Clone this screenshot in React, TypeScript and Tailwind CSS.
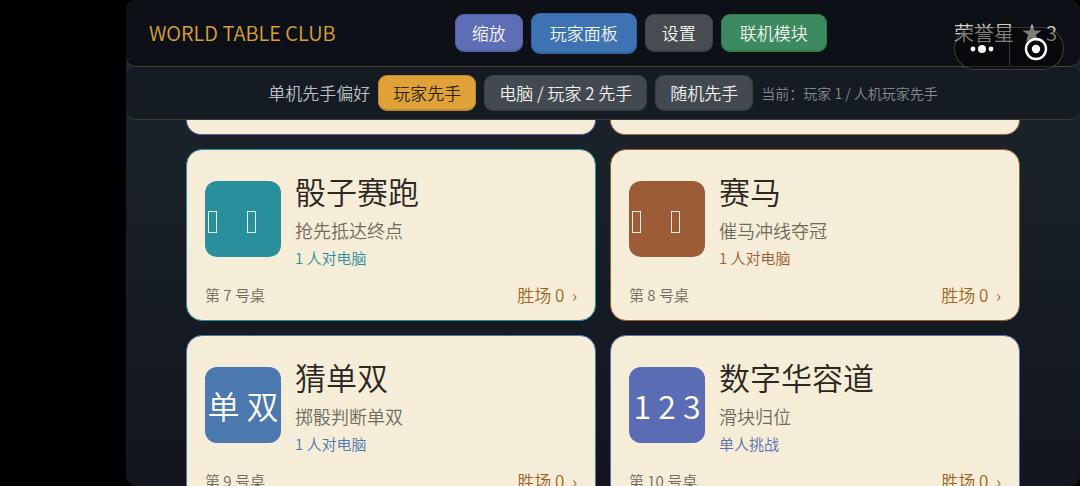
import React, { useState } from 'react';

interface Game {
  table: number;
  title: string;
  subtitle: string;
  mode: string;
  icon: string | null;
  wins: number;
  border: string;
  tile: string;
  accent: string;
}

const games: Game[] = [
  { table: 7, title: '骰子赛跑', subtitle: '抢先抵达终点', mode: '1 人对电脑', icon: null, wins: 0, border: 'border-[#2a8f9c]', tile: 'bg-[#2a8f9c]', accent: 'text-[#2a8f9c]' },
  { table: 8, title: '赛马', subtitle: '催马冲线夺冠', mode: '1 人对电脑', icon: null, wins: 0, border: 'border-[#9c5c36]', tile: 'bg-[#9c5c36]', accent: 'text-[#9c5c36]' },
  { table: 9, title: '猜单双', subtitle: '掷骰判断单双', mode: '1 人对电脑', icon: '单 双', wins: 0, border: 'border-[#4c78b0]', tile: 'bg-[#4c78b0]', accent: 'text-[#4c78b0]' },
  { table: 10, title: '数字华容道', subtitle: '滑块归位', mode: '单人挑战', icon: '1 2 3', wins: 0, border: 'border-[#5a6db4]', tile: 'bg-[#5a6db4]', accent: 'text-[#5a6db4]' },
];

const firstMoveOptions = ['玩家先手', '电脑 / 玩家 2 先手', '随机先手'];

const HeaderButton: React.FC<{ className: string; children: React.ReactNode }> = ({ className, children }) => (
  <button className={`rounded-[9px] border border-b-2 text-[17px] leading-6 text-[#f4f4f0] ${className}`}>{children}</button>
);

const GameIcon: React.FC<{ icon: string | null; tile: string }> = ({ icon, tile }) => (
  <div className={`flex h-[76px] w-[76px] shrink-0 items-center rounded-xl text-[32px] text-white ${tile}`}>
    {icon ? (
      <span className="w-full text-center leading-10 whitespace-nowrap">{icon}</span>
    ) : (
      <span className="flex gap-[30px] pt-[5px] pl-[3px]">
        <span className="h-[22px] w-[9px] border border-white/90" />
        <span className="h-[22px] w-[9px] border border-white/90" />
      </span>
    )}
  </div>
);

const GameCard: React.FC<{ game: Game }> = ({ game }) => (
  <button className={`flex h-[172px] flex-col justify-between rounded-2xl border bg-[#f5edd8] px-[18px] pt-4 pb-[13px] text-left ${game.border}`}>
    <span className="flex items-center gap-[14px]">
      <GameIcon icon={game.icon} tile={game.tile} />
      <span className="flex flex-col whitespace-nowrap">
        <span className="text-[31px] leading-[50px] text-[#2b2620]">{game.title}</span>
        <span className="text-[18px] leading-7 text-[#706a5e]">{game.subtitle}</span>
        <span className={`text-[15px] leading-7 ${game.accent}`}>{game.mode}</span>
      </span>
    </span>
    <span className="flex items-center justify-between leading-6">
      <span className="text-[15px] text-[#706a5e]">第 {game.table} 号桌</span>
      <span className="text-[17px] text-[#9c651e]">胜场 {game.wins}&nbsp; ›</span>
    </span>
  </button>
);

// Floating host menu: more actions and close
const HostCapsule: React.FC = () => (
  <div className="absolute top-[27px] right-4 flex h-[43px] w-[110px] items-center rounded-full border border-white/20 bg-black/40">
    <button aria-label="更多" className="flex flex-1 justify-center">
      <svg width="24" height="10" viewBox="0 0 24 10" fill="#fff">
        <circle cx="3" cy="5" r="2.4" />
        <circle cx="12" cy="5" r="4" />
        <circle cx="21" cy="5" r="2.4" />
      </svg>
    </button>
    <span className="h-[35px] w-px bg-white/20" />
    <button aria-label="关闭" className="flex flex-1 justify-center">
      <svg width="24" height="24" viewBox="0 0 24 24">
        <circle cx="12" cy="12" r="10" fill="none" stroke="#fff" strokeWidth="2.4" />
        <circle cx="12" cy="12" r="4.2" fill="#fff" />
      </svg>
    </button>
  </div>
);

export default function App() {
  const [firstMove, setFirstMove] = useState(firstMoveOptions[0]);

  return (
    <div className="h-screen bg-black pl-[126px] font-['Noto_Sans_CJK_SC',sans-serif] font-[350]">
      <div className="relative flex h-full flex-col overflow-hidden rounded-[10px] bg-linear-to-b from-[#1c272f] to-[#12151d]">
        <header className="flex h-[67px] shrink-0 items-center justify-between rounded-[10px] border-b border-[#4f422c] bg-[#0d1017] px-[23px] whitespace-nowrap">
          <h1 className="text-xl font-[350] text-[#d9a036]">WORLD TABLE CLUB</h1>
          <div className="mr-2 flex items-center gap-2">
            <HeaderButton className="h-[38px] border-[#5261a2] bg-[#5d6db6] px-4">缩放</HeaderButton>
            <HeaderButton className="h-[41px] border-[#35659f] bg-[#3d72b3] px-[18px]">玩家面板</HeaderButton>
            <HeaderButton className="h-[38px] border-[#3c4148] bg-[#474c53] px-4">设置</HeaderButton>
            <HeaderButton className="h-[38px] border-[#35794f] bg-[#3c8a60] px-[18px]">联机模块</HeaderButton>
          </div>
          <p className="flex items-center text-xl text-[#d5d1c4]">
            荣誉星
            <svg className="mr-1 ml-2" width="20" height="20" viewBox="0 0 21 20" fill="#d5d1c4">
              <path d="M10.500 0l2.500 7.300h7.600l-6.100 4.600 2.300 7.500-6.300-4.500-6.300 4.500 2.300-7.500L.4 7.300H8z" />
            </svg>
            3
          </p>
        </header>

        <div className="flex h-[53px] shrink-0 items-center justify-center gap-2 rounded-[10px] border-b border-[#3b3831] bg-[#151b23] whitespace-nowrap">
          <span className="text-[17px] text-[#bcc0c4]">单机先手偏好</span>
          {firstMoveOptions.map((option) => (
            <button
              key={option}
              onClick={() => setFirstMove(option)}
              className={`h-[36px] rounded-[9px] border border-b-2 px-[14px] text-[17px] leading-6 ${
                option === firstMove ? 'border-[#bd8930] bg-[#e0a238] text-[#2d2614]' : 'border-[#3a4047] bg-[#434950] text-[#f1f1ee]'
              }`}
            >
              {option}
            </button>
          ))}
          <span className="text-sm text-[#858b91]">当前：玩家 1 / 人机玩家先手</span>
        </div>

        <main className="min-h-0 flex-1 overflow-hidden px-[60px]">
          <div className="grid grid-cols-2 gap-[14px]">
            <div className="h-[15px] rounded-b-2xl border border-t-0 border-[#73549a] bg-[#f5edd8]" />
            <div className="h-[15px] rounded-b-2xl border border-t-0 border-[#a8623e] bg-[#f5edd8]" />
            {games.map((game) => (
              <GameCard key={game.table} game={game} />
            ))}
          </div>
        </main>

        <HostCapsule />
      </div>
    </div>
  );
}
